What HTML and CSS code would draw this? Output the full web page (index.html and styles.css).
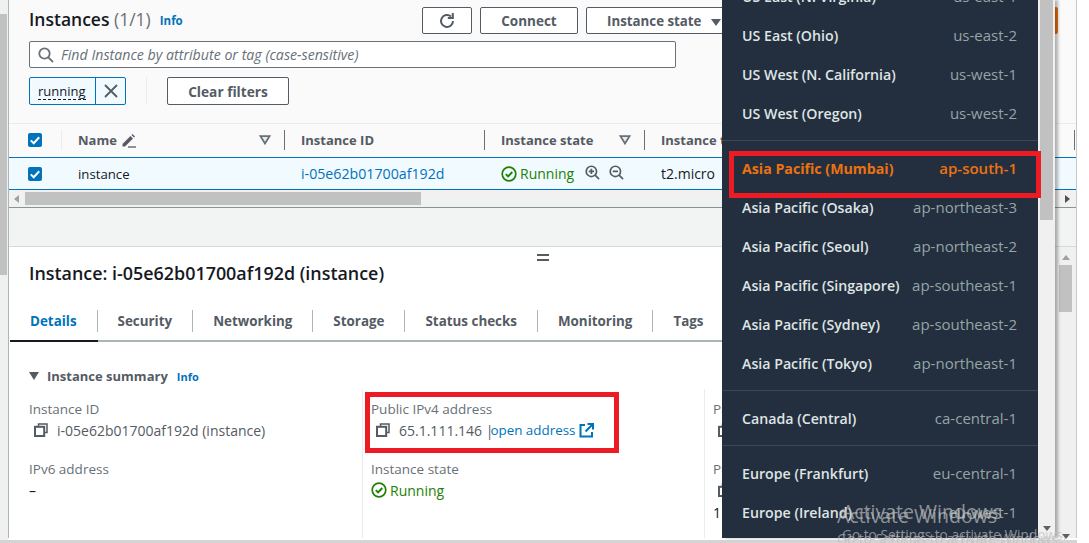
FILE: index.html
```html
<!DOCTYPE html>
<html lang="en">
<head>
    <meta charset="utf-8">
    <title>Instances | EC2</title>
    <link rel="stylesheet" href="styles.css">
</head>
<body>
<svg class="sprite" width="0" height="0">
    <symbol id="i-copy" viewBox="0 0 14 14">
        <path d="M4.5 3.5V1h8.500v8.500h-2.500" fill="none" stroke="currentColor" stroke-width="1.500"/>
        <rect x="1" y="3.800" width="9.200" height="9.200" fill="none" stroke="currentColor" stroke-width="2"/>
    </symbol>
    <symbol id="i-check" viewBox="0 0 16 16">
        <circle cx="8" cy="8" r="6.800" fill="none" stroke="currentColor" stroke-width="1.700"/>
        <path d="M4.800 8.200l2.300 2.300 4.200-4.500" fill="none" stroke="currentColor" stroke-width="1.900"/>
    </symbol>
    <symbol id="i-tick" viewBox="0 0 14 14">
        <path d="M2.800 7.400l2.900 2.800 5.500-6" fill="none" stroke="#fff" stroke-width="2"/>
    </symbol>
    <symbol id="i-sort" viewBox="0 0 12 10">
        <path d="M1.500 1.200h9L6 8.500z" fill="#eaeded" stroke="currentColor" stroke-width="1.800"/>
    </symbol>
    <symbol id="i-zoomin" viewBox="0 0 16 16">
        <circle cx="6.800" cy="6.800" r="5.500" fill="none" stroke="currentColor" stroke-width="1.800"/>
        <path d="M10.800 10.800l4.200 4.200M4 6.800h5.600M6.800 4v5.600" fill="none" stroke="currentColor" stroke-width="1.800"/>
    </symbol>
    <symbol id="i-zoomout" viewBox="0 0 16 16">
        <circle cx="6.800" cy="6.800" r="5.500" fill="none" stroke="currentColor" stroke-width="1.800"/>
        <path d="M10.800 10.800l4.200 4.200M4 6.800h5.600" fill="none" stroke="currentColor" stroke-width="1.800"/>
    </symbol>
</svg>

<div class="page">
    <div class="leftbar"><div class="leftthumb"></div></div>

    <div class="main">
        <div class="top">
            <div class="titlerow">
                <h1 class="title">Instances <span class="count">(1/1)</span></h1>
                <a class="info">Info</a>
                <div class="actions">
                    <button class="btn btn-refresh">
                        <svg width="18" height="18" viewBox="0 0 18 18"><path d="M15 9a6 6 0 1 1-2-4.500" fill="none" stroke="currentColor" stroke-width="2"/><path d="M14.800 1v5h-5" fill="none" stroke="currentColor" stroke-width="2"/></svg>
                    </button>
                    <button class="btn btn-connect">Connect</button>
                    <button class="btn btn-state">Instance state <span class="caret"></span></button>
                    <div class="launch"></div>
                </div>
            </div>

            <div class="search">
                <svg width="16" height="16" viewBox="0 0 16 16"><circle cx="6.500" cy="6.500" r="5.200" fill="none" stroke="currentColor" stroke-width="1.800"/><path d="M10.300 10.300l4.700 4.700" stroke="currentColor" stroke-width="1.800"/></svg>
                <span>Find Instance by attribute or tag (case-sensitive)</span>
            </div>

            <div class="filters">
                <div class="token">
                    <span class="token-text"><span>running</span></span>
                    <span class="token-x">
                        <svg width="14" height="14" viewBox="0 0 14 14"><path d="M1 1l12 12M13 1L1 13" stroke="currentColor" stroke-width="1.800"/></svg>
                    </span>
                </div>
                <div class="filter-sep"></div>
                <button class="btn btn-clear">Clear filters</button>
            </div>

            <div class="thead">
                <div class="cell c-check"><span class="box"><svg width="14" height="14"><use href="#i-tick"/></svg></span></div>
                <div class="cell c-name">Name
                    <svg class="pencil" width="15" height="15" viewBox="0 0 15 15"><path d="M1.500 11l8-8 2.500 2.500-8 8H1.500zM10.500 2l1-1 2.500 2.500-1 1" fill="currentColor"/><path d="M7 14h8" stroke="currentColor" stroke-width="1.300"/></svg>
                    <svg class="sort" width="12" height="10"><use href="#i-sort"/></svg>
                </div>
                <div class="cell c-id">Instance ID</div>
                <div class="cell c-state">Instance state <svg class="sort" width="12" height="10"><use href="#i-sort"/></svg></div>
                <div class="cell c-type">Instance type</div>
            </div>
            <div class="trow">
                <div class="cell c-check"><span class="box"><svg width="14" height="14"><use href="#i-tick"/></svg></span></div>
                <div class="cell c-name">instance</div>
                <div class="cell c-id"><a class="link">i-05e62b01700af192d</a></div>
                <div class="cell c-state">
                    <svg class="green" width="16" height="16"><use href="#i-check"/></svg>
                    <span class="running">Running</span>
                    <svg class="zoom" width="15" height="15"><use href="#i-zoomin"/></svg>
                    <svg class="zoom" width="15" height="15"><use href="#i-zoomout"/></svg>
                </div>
                <div class="cell c-type">t2.micro</div>
            </div>
            <div class="hscroll">
                <span class="arrow arrow-left"></span>
                <div class="hthumb"></div>
                <span class="arrow arrow-right"></span>
            </div>
        </div>

        <div class="band"></div>

        <div class="bottom">
            <div class="detail">
                <div class="handle"></div>
                <h2 class="detail-title">Instance: i-05e62b01700af192d (instance)</h2>
                <div class="tabs">
                    <div class="tab tab-active"><span>Details</span></div>
                    <div class="tab"><span>Security</span></div>
                    <div class="tab"><span>Networking</span></div>
                    <div class="tab"><span>Storage</span></div>
                    <div class="tab"><span>Status checks</span></div>
                    <div class="tab"><span>Monitoring</span></div>
                    <div class="tab tab-last"><span>Tags</span></div>
                </div>
                <div class="summary-head">
                    <span class="tri"></span>
                    <span class="summary-title">Instance summary</span>
                    <a class="info info-small">Info</a>
                </div>
                <div class="summary">
                    <div class="col col-1">
                        <div class="field">
                            <div class="label">Instance ID</div>
                            <div class="value"><svg class="copy" width="14" height="14"><use href="#i-copy"/></svg>i-05e62b01700af192d (instance)</div>
                        </div>
                        <div class="field">
                            <div class="label">IPv6 address</div>
                            <div class="value value-plain">–</div>
                        </div>
                    </div>
                    <div class="col col-2">
                        <div class="field">
                            <div class="label">Public IPv4 address</div>
                            <div class="value"><svg class="copy" width="14" height="14"><use href="#i-copy"/></svg>65.1.111.146 |<a class="link">open address</a>
                                <svg class="ext" width="15" height="15" viewBox="0 0 15 15"><path d="M6 2H1.500v11.500H13V9" fill="none" stroke="currentColor" stroke-width="2"/><path d="M8.500 1H14v5.500M14 1L6.500 8.500" fill="none" stroke="currentColor" stroke-width="2"/></svg>
                            </div>
                        </div>
                        <div class="field">
                            <div class="label">Instance state</div>
                            <div class="value value-plain">
                                <svg class="green" width="16" height="16"><use href="#i-check"/></svg>
                                <span class="running">Running</span>
                            </div>
                        </div>
                    </div>
                    <div class="col col-3">
                        <div class="field">
                            <div class="label">Private IPv4 addresses</div>
                            <div class="value"><svg class="copy" width="14" height="14"><use href="#i-copy"/></svg></div>
                        </div>
                        <div class="field">
                            <div class="label">Public IPv4 DNS</div>
                            <div class="value"><svg class="copy" width="14" height="14"><use href="#i-copy"/></svg></div>
                            <div class="value value-plain">1</div>
                        </div>
                    </div>
                </div>
            </div>
            <div class="vscroll">
                <span class="arrow arrow-up"></span>
                <div class="vthumb"></div>
                <span class="arrow arrow-down"></span>
            </div>
        </div>
    </div>
</div>
<div class="pagebar"></div>

<div class="menu">
    <div class="regions">
        <div class="group">
            <div class="region"><span>US East (N. Virginia)</span><span class="code">us-east-1</span></div>
            <div class="region"><span>US East (Ohio)</span><span class="code">us-east-2</span></div>
            <div class="region"><span>US West (N. California)</span><span class="code">us-west-1</span></div>
            <div class="region"><span>US West (Oregon)</span><span class="code">us-west-2</span></div>
        </div>
        <div class="group">
            <div class="region region-on"><span>Asia Pacific (Mumbai)</span><span class="code">ap-south-1</span></div>
            <div class="region"><span>Asia Pacific (Osaka)</span><span class="code">ap-northeast-3</span></div>
            <div class="region"><span>Asia Pacific (Seoul)</span><span class="code">ap-northeast-2</span></div>
            <div class="region"><span>Asia Pacific (Singapore)</span><span class="code">ap-southeast-1</span></div>
            <div class="region"><span>Asia Pacific (Sydney)</span><span class="code">ap-southeast-2</span></div>
            <div class="region"><span>Asia Pacific (Tokyo)</span><span class="code">ap-northeast-1</span></div>
        </div>
        <div class="group">
            <div class="region"><span>Canada (Central)</span><span class="code">ca-central-1</span></div>
        </div>
        <div class="group">
            <div class="region"><span>Europe (Frankfurt)</span><span class="code">eu-central-1</span></div>
            <div class="region"><span>Europe (Ireland)</span><span class="code">eu-west-1</span></div>
        </div>
    </div>
    <div class="menu-scroll">
        <div class="menu-thumb"></div>
        <span class="arrow arrow-down"></span>
    </div>
</div>

<div class="redbox redbox-region"></div>
<div class="redbox redbox-ip"></div>

<div class="watermark wm-a"><div class="wm-big">Activate Windows</div><div class="wm-small">Go to Settings to activate Windows.</div></div>
<div class="watermark wm-b"><div class="wm-big">Activate Windows</div><div class="wm-small">Go to Settings to activate Windows.</div></div>
</body>
</html>
```
FILE: styles.css
```css
* {
    box-sizing: border-box;
}
html, body {
    margin: 0;
    height: 543px;
    overflow: hidden;
    background: #fff;
}
body {
    position: relative;
    font-family: "Open Sans", "Noto Sans", sans-serif;
    font-size: 13px;
    color: #16191f;
}
a {
    text-decoration: none;
}
h1, h2 {
    margin: 0;
}
.sprite {
    position: absolute;
}

.page {
    display: flex;
    width: 1077px;
    height: 540px;
}
.leftbar {
    width: 8px;
    background: #f0f0f0;
    padding-top: 14px;
}
.leftthumb {
    width: 7px;
    height: 261px;
    background: #c1c1c1;
}
.main {
    flex: 1;
    min-width: 0;
    border-left: 1px solid #aab7b8;
    border-right: 1px solid #c8c8c8;
    height: 538px;
    display: flex;
    flex-direction: column;
}

/* top table */
.top {
    height: 208px;
    background: #fafafa;
    border-bottom: 1px solid #879596;
    padding-top: 7px;
}
.titlerow {
    display: flex;
    align-items: center;
    height: 27px;
    padding-left: 20px;
    padding-right: 19px;
}
.title {
    font-size: 17.500px;
    font-weight: 600;
    line-height: 27px;
    margin-top: -2px;
}
.count {
    font-weight: 400;
    color: #687078;
}
.info {
    color: #0073bb;
    font-size: 11.500px;
    font-weight: 700;
    margin-left: 9px;
}
.actions {
    margin-left: auto;
    display: flex;
    gap: 8px;
}
.btn {
    height: 27px;
    background: #fff;
    border: 1px solid #545b64;
    border-radius: 2px;
    color: #545b64;
    font-family: inherit;
    font-size: 13.500px;
    font-weight: 700;
    padding: 0;
}
.btn-refresh {
    width: 50px;
    display: flex;
    align-items: center;
    justify-content: center;
}
.btn-connect {
    width: 98px;
}
.btn-state {
    width: 150px;
    text-align: left;
    padding-left: 20px;
    font-size: 13.300px;
}
.caret {
    display: inline-block;
    margin-left: 6px;
    border-left: 5px solid transparent;
    border-right: 5px solid transparent;
    border-top: 7px solid #545b64;
}
.launch {
    width: 100px;
    background: #ec7211;
    border-radius: 2px;
    margin-left: 214px;
    margin-right: -1px;
}

.search {
    display: flex;
    align-items: center;
    gap: 7px;
    width: 647px;
    height: 27px;
    margin: 7px 0 0 20px;
    padding-left: 8px;
    background: #fff;
    border: 1px solid #687078;
    border-radius: 2px;
    color: #687078;
    font-size: 14.200px;
    font-style: italic;
}
.filters {
    display: flex;
    align-items: center;
    height: 28px;
    margin: 9px 0 0 20px;
}
.token {
    display: flex;
    height: 28px;
    background: #f1faff;
    border: 1px solid #0073bb;
    border-radius: 2px;
}
.token-text {
    display: flex;
    align-items: center;
    padding: 0 8px;
    border-right: 1px solid #0073bb;
    width: 66px;
}
.token-text span {
    border-bottom: 1px dashed #16191f;
    line-height: 16px;
}
.token-x {
    width: 29px;
    display: flex;
    align-items: center;
    justify-content: center;
    color: #545b64;
}
.filter-sep {
    width: 1px;
    height: 28px;
    background: #eaeded;
    margin: 0 20px 0 20px;
}
.btn-clear {
    width: 122px;
    height: 28px;
    font-size: 13.700px;
}

.thead {
    display: flex;
    height: 34px;
    margin-top: 18px;
    border-top: 1px solid #eaeded;
    color: #545b64;
    font-weight: 700;
}
.trow {
    display: flex;
    height: 33px;
    background: #f1faff;
    border-top: 1px solid #0073bb;
    border-bottom: 1px solid #0073bb;
    font-size: 13.200px;
}
.cell {
    display: flex;
    align-items: center;
    padding-left: 16px;
    white-space: nowrap;
}
.thead .cell {
    height: 20px;
    margin-top: 6px;
    border-right: 1px solid #687078;
    position: relative;
}
.thead .c-check {
    border-right-color: #eaeded;
}
.c-check {
    width: 53px;
    padding-left: 19px;
}
.c-name {
    width: 223px;
}
.c-id {
    width: 200px;
}
.c-state {
    width: 160px;
}
.c-type {
    width: 430px;
}
.trow .c-type {
    font-size: 14px;
}
.trow .link {
    font-size: 14.200px;
}
.box {
    display: block;
    width: 14px;
    height: 14px;
    background: #0073bb;
    border-radius: 2px;
}
.box svg {
    display: block;
}
.pencil {
    margin-left: 4px;
}
.sort {
    margin-left: auto;
    margin-right: 13px;
    color: #687078;
}
.link {
    color: #0073bb;
}
.green {
    color: #1d8102;
    flex: none;
}
.running {
    color: #1d8102;
    margin-left: 3px;
    font-size: 14px;
}
.zoom {
    color: #545b64;
    margin-left: 11px;
    margin-bottom: 3px;
}
.zoom + .zoom {
    margin-left: 9px;
}
.hscroll {
    display: flex;
    align-items: center;
    height: 17px;
    background: #f1f1f1;
    padding: 0 3px 0 5px;
}
.hthumb {
    width: 396px;
    height: 13px;
    margin-left: 6px;
    background: #c1c1c1;
}
.arrow {
    display: block;
    width: 0;
    height: 0;
    flex: none;
}
.arrow-left {
    border-top: 4px solid transparent;
    border-bottom: 4px solid transparent;
    border-right: 5px solid #a0a0a0;
}
.arrow-right {
    margin-left: auto;
    margin-right: 3px;
    border-top: 4px solid transparent;
    border-bottom: 4px solid transparent;
    border-left: 5px solid #505050;
}
.arrow-up {
    border-left: 4px solid transparent;
    border-right: 4px solid transparent;
    border-bottom: 5px solid #a0a0a0;
}
.arrow-down {
    border-left: 4px solid transparent;
    border-right: 4px solid transparent;
    border-top: 5px solid #606060;
}

.band {
    height: 39px;
    background: #f2f3f3;
    border-bottom: 1px solid #d5dbdb;
}

/* details panel */
.bottom {
    flex: 1;
    display: flex;
    min-height: 0;
    background: #fff;
}
.detail {
    position: relative;
    width: 1046px;
    overflow: hidden;
    display: flex;
    flex-direction: column;
}
.vscroll {
    flex: 1;
    background: #f0f0f0;
    display: flex;
    flex-direction: column;
    align-items: center;
    padding-top: 8px;
}
.vthumb {
    width: 13px;
    height: 47px;
    margin-top: 5px;
    background: #c1c1c1;
}
.vscroll .arrow-down {
    margin-top: auto;
    margin-bottom: -1px;
}
.handle {
    position: absolute;
    top: 7px;
    left: 528px;
    width: 12px;
    height: 7px;
    border-top: 2px solid #545b64;
    border-bottom: 2px solid #545b64;
}
.detail-title {
    margin: 15px 0 0 20px;
    font-size: 17.900px;
    font-weight: 600;
    line-height: 22px;
}
.tabs {
    display: flex;
    height: 32px;
    margin: 26px 0 0 1px;
    border-bottom: 2px solid #aab7b8;
}
.tab {
    height: 30px;
}
.tab span {
    display: block;
    height: 22px;
    line-height: 22px;
    padding: 0 20px;
    border-right: 1px solid #aab7b8;
    color: #545b64;
    font-size: 13.400px;
    font-weight: 700;
    white-space: nowrap;
}
.tab-active {
    border-bottom: 2px solid #16191f;
    height: 32px;
}
.tab-active span {
    color: #0073bb;
}
.tab-last span {
    border-right: 0;
}
.summary-head {
    display: flex;
    align-items: center;
    height: 20px;
    margin: 24px 0 0 20px;
}
.tri {
    width: 0;
    height: 0;
    border-left: 5px solid transparent;
    border-right: 5px solid transparent;
    border-top: 8px solid #545b64;
}
.summary-title {
    margin-left: 8px;
    font-weight: 700;
    color: #545b64;
}
.info-small {
    font-size: 11px;
}
.summary {
    display: flex;
    margin-top: 3px;
    flex: 1;
}
.col {
    padding: 10px 0 0 20px;
    border-right: 1px solid #eaeded;
    width: 354px;
}
.col-2, .col-3 {
    width: 342px;
    padding-left: 8px;
}
.col-3 {
    border-right: 0;
}
.field {
    height: 60px;
}
.label {
    color: #687078;
    font-size: 13.500px;
    line-height: 20px;
}
.value {
    display: flex;
    align-items: center;
    height: 22px;
    color: #545b64;
    font-size: 14px;
    white-space: nowrap;
}
.value .link {
    font-size: 13.400px;
    margin-left: -3px;
}
.value-plain {
    color: #16191f;
}
.copy {
    color: #545b64;
    margin: 0 9px 0 5px;
    flex: none;
}
.ext {
    color: #0073bb;
    margin-left: 4px;
}

.pagebar {
    height: 3px;
    width: 1077px;
    background: #d4d4d4;
}

/* region dropdown, sits over the console */
.menu {
    position: absolute;
    top: 0;
    left: 722px;
    width: 333px;
    height: 538px;
    display: flex;
    overflow: hidden;
    box-shadow: 3px 0 3px rgba(0, 0, 0, .3);
}
.regions {
    width: 316px;
    background: #232f3e;
}
.group {
    padding: 8px 0;
    border-top: 1px solid #414750;
    margin-bottom: -1px;
}
.group:first-child {
    border-top: 0;
    margin-top: -31px;
}
.region {
    display: flex;
    justify-content: space-between;
    align-items: center;
    height: 39px;
    padding: 0 21px 0 20px;
    color: #dfe4e4;
    font-size: 14.200px;
    font-weight: 600;
    white-space: nowrap;
}
.code {
    color: #95a5a6;
    font-size: 15px;
    font-weight: 400;
    margin-bottom: 1px;
}
.region-on {
    color: #ec7211;
    font-weight: 700;
}
.region-on .code {
    color: #ec7211;
    font-weight: 600;
}
.menu-scroll {
    flex: 1;
    background: #f0f0f0;
    display: flex;
    flex-direction: column;
    align-items: center;
    padding-bottom: 7px;
}
.menu-thumb {
    width: 13px;
    height: 220px;
    background: #c1c1c1;
}
.menu-scroll .arrow-down {
    margin-top: auto;
}

.redbox {
    position: absolute;
    border: 5px solid #ed1c24;
}
.redbox-region {
    left: 729px;
    top: 151px;
    width: 312px;
    height: 47px;
}
.redbox-ip {
    left: 365px;
    top: 392px;
    width: 254px;
    height: 61px;
}

.watermark {
    position: absolute;
    color: rgba(190, 190, 190, .7);
    white-space: nowrap;
}
.wm-a {
    left: 837px;
    top: 502px;
}
.wm-b {
    left: 842px;
    top: 498px;
}
.wm-big {
    font-size: 19.500px;
    line-height: 28px;
}
.wm-small {
    font-size: 13.700px;
    line-height: 18px;
}
```
